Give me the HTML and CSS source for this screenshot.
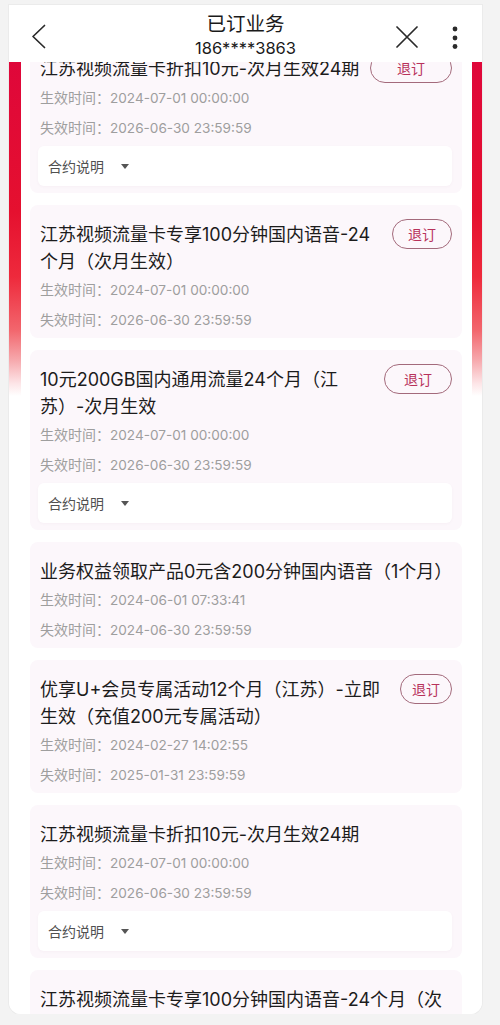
FILE: index.html
```html
<!DOCTYPE html>
<html lang="zh-CN">
<head>
<meta charset="utf-8">
<title>已订业务</title>
<link rel="stylesheet" href="styles.css">
</head>
<body>
<div class="screen">
  <header class="topbar">
    <div class="tb-left">
      <svg class="ic" width="15" height="25" viewBox="0 0 15 25"><path d="M13.5 1.5 L2 12.5 L13.5 23.5" fill="none" stroke="#2a2a2a" stroke-width="1.7" stroke-linejoin="round" stroke-linecap="round"/></svg>
    </div>
    <div class="tb-center">
      <div class="tb-title">已订业务</div>
      <div class="tb-phone">186****3863</div>
    </div>
    <div class="tb-right">
      <svg class="ic" width="24" height="22" viewBox="0 0 24 22"><path d="M2 1 L22 21 M22 1 L2 21" fill="none" stroke="#2a2a2a" stroke-width="1.7" stroke-linecap="round"/></svg>
      <svg class="ic" width="6" height="24" viewBox="0 0 6 24"><circle cx="3" cy="3" r="2.4" fill="#2a2a2a"/><circle cx="3" cy="12" r="2.4" fill="#2a2a2a"/><circle cx="3" cy="20.5" r="2.4" fill="#2a2a2a"/></svg>
    </div>
  </header>
  <main class="body">
    <div class="panel">
      <section class="item item-first">
        <div class="item-head">
          <div class="item-title nowrap">江苏视频流量卡折扣10元-次月生效24期</div>
          <button class="btn btn-82">退订</button>
        </div>
        <div class="line">生效时间：<span class="val">2024-07-01 00:00:00</span></div>
        <div class="line">失效时间：<span class="val">2026-06-30 23:59:59</span></div>
        <div class="contract">合约说明<span class="caret"></span></div>
      </section>

      <section class="item">
        <div class="item-head">
          <div class="item-title">江苏视频流量卡专享100分钟国内语音-24个月（次月生效）</div>
          <button class="btn btn-60">退订</button>
        </div>
        <div class="line">生效时间：<span class="val">2024-07-01 00:00:00</span></div>
        <div class="line">失效时间：<span class="val">2026-06-30 23:59:59</span></div>
      </section>

      <section class="item">
        <div class="item-head">
          <div class="item-title">10元200GB国内通用流量24个月（江苏）-次月生效</div>
          <button class="btn btn-68 btn-far">退订</button>
        </div>
        <div class="line">生效时间：<span class="val">2024-07-01 00:00:00</span></div>
        <div class="line">失效时间：<span class="val">2026-06-30 23:59:59</span></div>
        <div class="contract">合约说明<span class="caret"></span></div>
      </section>

      <section class="item">
        <div class="item-head">
          <div class="item-title nowrap">业务权益领取产品0元含200分钟国内语音（1个月）</div>
        </div>
        <div class="line">生效时间：<span class="val">2024-06-01 07:33:41</span></div>
        <div class="line">失效时间：<span class="val">2024-06-30 23:59:59</span></div>
      </section>

      <section class="item">
        <div class="item-head">
          <div class="item-title">优享U+会员专属活动12个月（江苏）-立即生效（充值200元专属活动）</div>
          <button class="btn btn-52">退订</button>
        </div>
        <div class="line">生效时间：<span class="val">2024-02-27 14:02:55</span></div>
        <div class="line">失效时间：<span class="val">2025-01-31 23:59:59</span></div>
      </section>

      <section class="item">
        <div class="item-head">
          <div class="item-title nowrap">江苏视频流量卡折扣10元-次月生效24期</div>
        </div>
        <div class="line">生效时间：<span class="val">2024-07-01 00:00:00</span></div>
        <div class="line">失效时间：<span class="val">2026-06-30 23:59:59</span></div>
        <div class="contract">合约说明<span class="caret"></span></div>
      </section>

      <section class="item">
        <div class="item-head">
          <div class="item-title">江苏视频流量卡专享100分钟国内语音-24个月（次月生效）</div>
        </div>
        <div class="line">生效时间：<span class="val">2024-07-01 00:00:00</span></div>
        <div class="line">失效时间：<span class="val">2026-06-30 23:59:59</span></div>
      </section>
    </div>
  </main>
</div>
</body>
</html>
```

FILE: styles.css
```css
* {
  box-sizing: border-box;
  margin: 0;
  padding: 0;
}

body {
  background: #f3f3f3;
  font-family: "Inter", "Noto Sans CJK SC", sans-serif;
  color: #1c1c1c;
}

.screen {
  margin: 5px 0 0 9px;
  width: 473px;
  height: 1009px;
  background: #fff;
  border-radius: 0 0 12px 12px;
  overflow: hidden;
  display: flex;
  flex-direction: column;
  box-shadow: 0 0 0 1px #ebebeb;
}

/* top bar */
.topbar {
  height: 57px;
  flex: none;
  display: grid;
  grid-template-columns: 1fr auto 1fr;
  align-items: start;
  background: #fff;
  position: relative;
  z-index: 1;
}

.ic {
  display: block;
}

.tb-left {
  padding: 19px 0 0 22px;
}

.tb-center {
  text-align: center;
  padding-top: 6px;
}

.tb-title {
  font-size: 19.5px;
  line-height: 26px;
  color: #1a1a1a;
}

.tb-phone {
  font-size: 16.5px;
  line-height: 20px;
  margin-top: 1px;
  color: #1a1a1a;
}

.tb-right {
  display: flex;
  justify-content: flex-end;
  align-items: flex-start;
  gap: 33px;
  padding: 21px 24px 0 0;
}

/* body with red band */
.body {
  flex: 1;
  min-height: 0;
  padding: 0 10px 0 12px;
  background: linear-gradient(180deg,
    #df073a 0px,
    #e5102f 150px,
    #ee2a3c 215px,
    #f2666d 268px,
    #f6a8ac 298px,
    #fde6e8 322px,
    #ffffff 334px,
    #ffffff 100%);
}

.panel {
  height: 100%;
  background: #fff;
  padding: 0 10px 0 9px;
  display: flex;
  flex-direction: column;
  gap: 12px;
  overflow: hidden;
}

/* items */
.item {
  flex: none;
  background: #fcf7fb;
  border-radius: 8px;
  padding: 14px 10px 3px 10px;
}

.item-first {
  margin-top: -23px;
}

.item-head {
  display: flex;
  align-items: flex-start;
}

.item-title {
  flex: 1;
  min-width: 0;
  font-size: 18px;
  line-height: 27px;
  padding-top: 2px;
  color: #1c1c1c;
}

.nowrap {
  white-space: nowrap;
}

.btn {
  flex: none;
  height: 30px;
  margin-left: 15px;
  border: 1.5px solid #a36a7b;
  border-radius: 15px;
  background: transparent;
  color: #b8325b;
  font-family: inherit;
  font-size: 14px;
  line-height: 27px;
  text-align: center;
}

.btn-far { margin-left: 46px; }

.btn-82 { width: 82px; }
.btn-68 { width: 68px; }
.btn-60 { width: 60px; }
.btn-52 { width: 52px; }

.line {
  font-size: 14px;
  line-height: 29px;
  color: #9e9e9e;
}

.val {
  font-size: 13.6px;
}

.contract {
  margin: 3px 0 4px -2px;
  height: 40px;
  background: #fff;
  border-radius: 6px;
  display: flex;
  align-items: center;
  padding-left: 10px;
  font-size: 14px;
  color: #505050;
  box-shadow: 0 1px 3px rgba(120, 80, 100, 0.04);
}

.caret {
  width: 0;
  height: 0;
  border-left: 4px solid transparent;
  border-right: 4px solid transparent;
  border-top: 5px solid #555;
  margin-left: 17px;
}
```
